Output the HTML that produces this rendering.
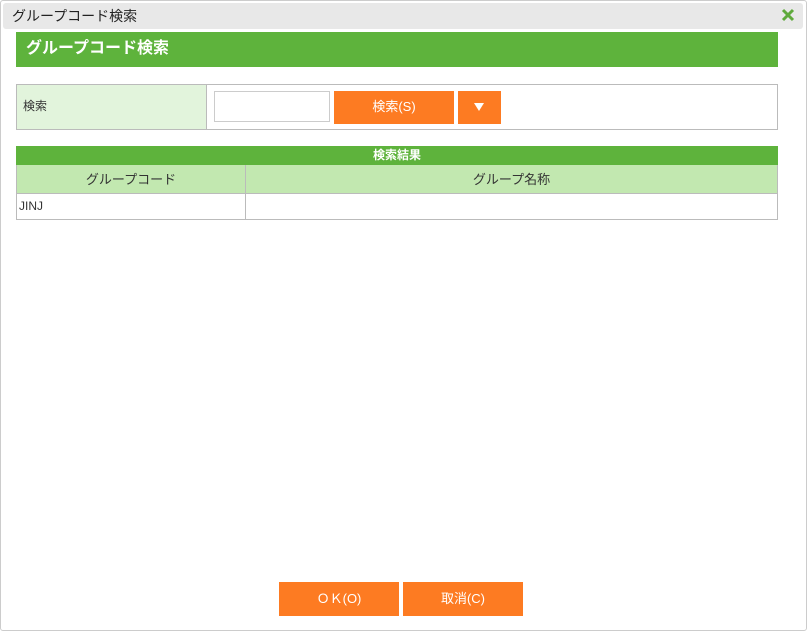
<!DOCTYPE html>
<html><head><meta charset="utf-8"><style>
*{margin:0;padding:0;box-sizing:border-box}
body{width:808px;height:632px;background:#fff;font-family:"Liberation Sans","Noto Sans CJK JP",sans-serif;font-size:13px;color:#333;position:relative;overflow:hidden}
.abs{position:absolute}
.btn{position:absolute;background:#fd7b22;color:#fff;text-align:center;font-size:13px}
</style></head><body>
<div class="abs" style="left:0;top:0;width:807px;height:631px;border:1px solid #ccc;border-radius:3px"></div>
<div class="abs" style="left:3px;top:3px;width:800px;height:26px;background:#e8e8e8;border-radius:3px;font-size:14px;line-height:26px;padding-left:9px;color:#222">グループコード検索</div>
<svg class="abs" style="left:781px;top:8px" width="14" height="14" viewBox="0 0 14 14"><path d="M2 2L12 12M12 2L2 12" stroke="#5faa3c" stroke-width="3"/></svg>
<div class="abs" style="left:16px;top:32px;width:762px;height:35px;background:#5eb33c;color:#fff;font-weight:bold;font-size:16px;line-height:33px;padding-left:10px">グループコード検索</div>
<div class="abs" style="left:16px;top:84px;width:762px;height:46px;border:1px solid #bbb"></div>
<div class="abs" style="left:17px;top:85px;width:190px;height:44px;background:#e2f4dc;border-right:1px solid #bbb;line-height:42px;padding-left:6px;font-size:12px">検索</div>
<div class="abs" style="left:214px;top:91px;width:116px;height:31px;border:1px solid #ccc"></div>
<div class="btn" style="left:334px;top:91px;width:120px;height:33px;line-height:31px">検索(S)</div>
<svg class="abs" style="left:473px;top:102px" width="12" height="10" viewBox="0 0 12 10"><path d="M1 1H11L6 9Z" fill="#fff"/></svg>
<div class="btn" style="left:458px;top:91px;width:43px;height:33px;z-index:-1"></div>
<div class="abs" style="left:16px;top:146px;width:762px;height:19px;background:#5eb33c;color:#fff;font-weight:bold;font-size:12px;text-align:center;line-height:18px">検索結果</div>
<div class="abs" style="left:16px;top:165px;width:762px;height:55px;border:1px solid #bbb;border-top:none"></div>
<div class="abs" style="left:17px;top:165px;width:760px;height:29px;background:#c2e8b0;border-bottom:1px solid #bbb"></div>
<div class="abs" style="left:245px;top:165px;width:1px;height:54px;background:#bbb"></div>
<div class="abs" style="left:17px;top:165px;width:228px;line-height:29px;text-align:center">グループコード</div>
<div class="abs" style="left:246px;top:165px;width:531px;line-height:29px;text-align:center">グループ名称</div>
<div class="abs" style="left:19px;top:194px;line-height:24px;font-size:12px">JINJ</div>
<div class="btn" style="left:279px;top:582px;width:120px;height:34px;line-height:33px">ＯＫ(O)</div>
<div class="btn" style="left:403px;top:582px;width:120px;height:34px;line-height:33px">取消(C)</div>
</body></html>
